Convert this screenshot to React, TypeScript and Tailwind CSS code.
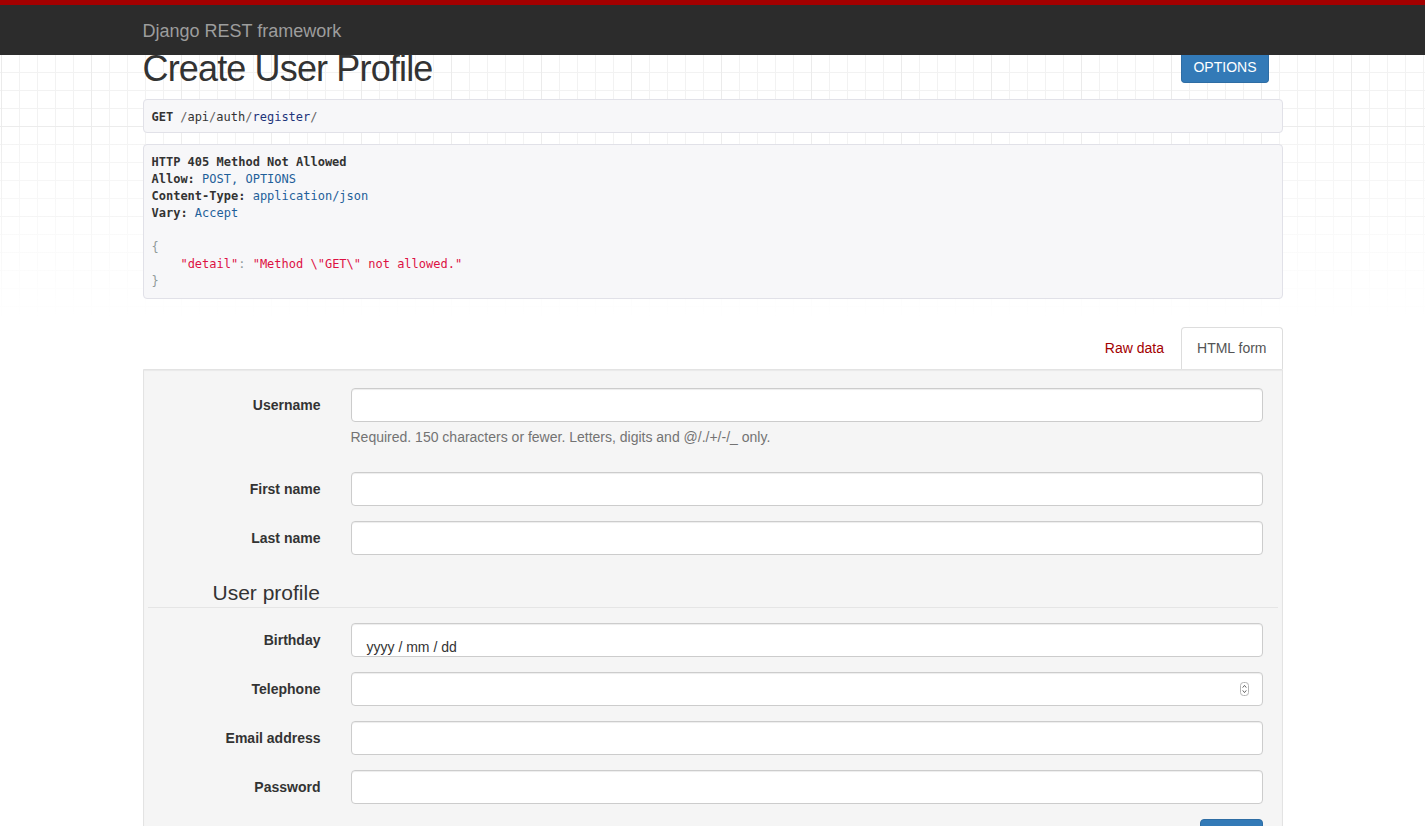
import React from "react";

const sans = "font-['Helvetica_Neue','Liberation_Sans',Arial,sans-serif]";
const mono = "font-['DejaVu_Sans_Mono','Liberation_Mono',monospace]";

function Field({ label, children, help }: { label: string; children?: React.ReactNode; help?: string }) {
  return (
    <div className="flex mb-[15px]">
      <div className="w-[188px] shrink-0 pr-[15px] pt-[7px] text-right text-[14px] leading-[20px] font-bold text-[#333]">{label}</div>
      <div className="flex-1 px-[15px]">
        {children ?? <div className="h-[34px] bg-white border border-[#ccc] rounded-[4px] shadow-[inset_0_1px_1px_rgba(0,0,0,0.075)]" />}
        {help && <div className="mt-[5px] mb-[10px] text-[14px] leading-[20px] text-[#737373]">{help}</div>}
      </div>
    </div>
  );
}

export default function App() {
  return (
    <div className={`${sans} min-h-[826px] bg-white text-[#333]`}>
      <div className="h-[55px] bg-[#2c2c2c] border-t-[5px] border-[#a30000]">
        <div className="w-[1140px] mx-auto h-[50px] pt-[2px] flex items-center">
          <span className="text-[18px] text-[#9d9d9d]">Django REST framework</span>
        </div>
      </div>
      <div className="pb-[40px] [background-image:linear-gradient(to_bottom,rgba(255,255,255,0)_60px,#fff_265px),linear-gradient(to_right,#ebebeb_1px,transparent_1px),linear-gradient(to_bottom,#ebebeb_1px,transparent_1px),linear-gradient(to_right,#f2f2f2_1px,transparent_1px),linear-gradient(to_bottom,#f2f2f2_1px,transparent_1px)] [background-size:100%_100%,90px_90px,90px_90px,18px_18px,18px_18px] [background-position:0_0,1px_71px,1px_71px,1px_17px,1px_17px] [background-repeat:no-repeat,repeat,repeat,repeat,repeat]">
        <div className="w-[1140px] mx-auto">
          <div className="flex items-start justify-between">
            <h1 className="text-[36px] leading-[28px] h-[28px] font-light text-[#333] tracking-[-0.85px]">Create User Profile</h1>
            <button className="mr-[14px] h-[28px] px-[11px] pb-[3px] flex items-center rounded-b-[4px] bg-[#337ab7] border border-t-0 border-[#2e6da4] text-white text-[14px]">OPTIONS</button>
          </div>

          <div className={`${mono} mt-[16px] h-[34px] pt-[2px] flex items-center px-[8px] bg-[#f7f7f9] border border-[#e1e1e8] rounded-[4px] text-[12px]`}>
            <b className="text-[#333]">GET</b>
            <span className="ml-[7px] text-[#666]">/</span>
            <span className="text-[#333]">api</span>
            <span className="text-[#666]">/</span>
            <span className="text-[#333]">auth</span>
            <span className="text-[#666]">/</span>
            <span className="text-[#1e347b]">register</span>
            <span className="text-[#666]">/</span>
          </div>

          <div className={`${mono} mt-[11px] pt-[9px] pb-[8px] px-[8px] bg-[#f7f7f9] border border-[#e1e1e8] rounded-[4px] text-[12px] leading-[17px] whitespace-pre`}>
            <div><b>HTTP 405 Method Not Allowed</b></div>
            <div><b>Allow:</b> <span className="text-[#1f5f99]">POST, OPTIONS</span></div>
            <div><b>Content-Type:</b> <span className="text-[#1f5f99]">application/json</span></div>
            <div><b>Vary:</b> <span className="text-[#1f5f99]">Accept</span></div>
            <div>&nbsp;</div>
            <div className="text-[#8f9a9a]">{"{"}</div>
            <div>{"    "}<span className="text-[#dd1144]">"detail"</span><span className="text-[#8f9a9a]">: </span><span className="text-[#dd1144]">"Method \"GET\" not allowed."</span></div>
            <div className="text-[#8f9a9a]">{"}"}</div>
          </div>

          <div className="mt-[28px] flex justify-end">
            <div className="h-[42px] px-[15px] flex items-center text-[14px] text-[#a30000] mr-[2px]">Raw data</div>
            <div className="h-[42px] px-[15px] flex items-center text-[14px] text-[#555] bg-white border border-b-0 border-[#ddd] rounded-t-[4px]">HTML form</div>
          </div>

          <div className="bg-[#f5f5f5] border border-[#e3e3e3] rounded-b-[4px] pt-[18px] px-[4px] pb-[20px] shadow-[inset_0_1px_1px_rgba(0,0,0,0.05)]">
            <Field label="Username" help="Required. 150 characters or fewer. Letters, digits and @/./+/-/_ only." />
            <Field label="First name" />
            <Field label="Last name" />

            <div className="mt-[7px] mb-[15px] h-[38px] pt-[8px] border-b border-[#e5e5e5] pl-[65px] flex items-center text-[21px] text-[#333]">User profile</div>

            <Field label="Birthday">
              <div className="h-[34px] bg-white border border-[#ccc] rounded-[4px] pl-[15px] pt-[13px] text-[14px] leading-[20px] text-[#333] shadow-[inset_0_1px_1px_rgba(0,0,0,0.075)]">yyyy / mm / dd</div>
            </Field>
            <Field label="Telephone">
              <div className="h-[34px] bg-white border border-[#ccc] rounded-[4px] flex items-center justify-end pr-[13px] shadow-[inset_0_1px_1px_rgba(0,0,0,0.075)]">
                <svg width="9" height="14" viewBox="0 0 9 14">
                  <rect x="0.5" y="0.5" width="8" height="13" rx="3" fill="#fff" stroke="#b5b5b5" />
                  <path d="M2.7 5.6 L4.5 3.4 L6.3 5.6" fill="none" stroke="#555" strokeWidth="0.9" />
                  <path d="M2.7 8.4 L4.5 10.6 L6.3 8.4" fill="none" stroke="#555" strokeWidth="0.9" />
                </svg>
              </div>
            </Field>
            <Field label="Email address" />
            <Field label="Password" />

            <div className="flex justify-end pr-[15px]">
              <button className="h-[34px] w-[63px] rounded-[4px] bg-[#337ab7] border border-[#2e6da4] text-white text-[14px]">POST</button>
            </div>
          </div>
        </div>
      </div>
    </div>
  );
}
